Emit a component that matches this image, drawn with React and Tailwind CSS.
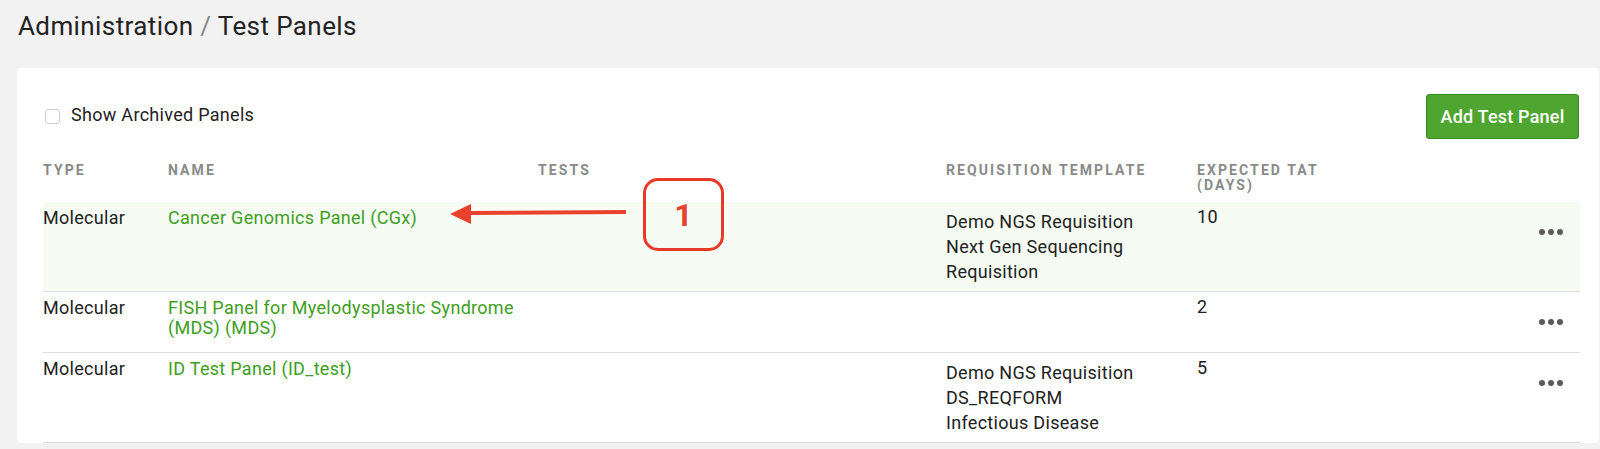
import React from "react";

const rows = [
  {
    type: "Molecular",
    name: ["Cancer Genomics Panel (CGx)"],
    reqs: ["Demo NGS Requisition", "Next Gen Sequencing", "Requisition"],
    tat: "10",
    highlight: true,
  },
  {
    type: "Molecular",
    name: ["FISH Panel for Myelodysplastic Syndrome", "(MDS) (MDS)"],
    reqs: [],
    tat: "2",
  },
  {
    type: "Molecular",
    name: ["ID Test Panel (ID_test)"],
    reqs: ["Demo NGS Requisition", "DS_REQFORM", "Infectious Disease"],
    tat: "5",
  },
];

function Dots() {
  return (
    <button className="w-[44px] h-[44px] flex items-center justify-center gap-[3px]">
      <span className="w-[6px] h-[6px] rounded-full bg-[#5a5a5a]" />
      <span className="w-[6px] h-[6px] rounded-full bg-[#5a5a5a]" />
      <span className="w-[6px] h-[6px] rounded-full bg-[#5a5a5a]" />
    </button>
  );
}

const cols = "grid grid-cols-[125px_370px_408px_251px_1fr_80px]";

export default function App() {
  return (
    <div
      className="min-h-[449px] bg-[#f2f2f2] text-[#212121]"
      style={{ fontFamily: "Roboto, 'Liberation Sans', sans-serif" }}
    >
      <div className="pl-[18px] pt-[11px] h-[68px]">
        <h1 className="text-[26px] leading-[30px] tracking-[0.4px] text-[#222]">
          Administration <span className="text-[#888]">/</span> Test Panels
        </h1>
      </div>
      <div className="ml-[17px] mr-[1px] bg-white rounded-[4px] relative">
        <div className="flex items-start justify-between pl-[28px] pr-[20px] pt-[26px]">
          <label className="flex items-center gap-[11px] mt-[11px]">
            <span className="w-[15px] h-[15px] rounded-[3px] border border-[#cfcfcf] bg-white mt-[3px]" />
            <span className="text-[18px] tracking-[0.3px] leading-[20px] text-[#222]">Show Archived Panels</span>
          </label>
          <button className="h-[45px] w-[153px] rounded-[3px] bg-[#4ea52f] border border-[#3a8a1f] text-white text-[18px] tracking-[0.2px] font-medium">
            Add Test Panel
          </button>
        </div>
        <div className="ml-[26px] mr-[19px] mt-[24px]">
          <div className={`${cols} text-[14px] font-bold tracking-[2.1px] text-[#8a8a8a] leading-[15px] pb-[9px]`}>
            <div>TYPE</div>
            <div>NAME</div>
            <div>TESTS</div>
            <div>REQUISITION TEMPLATE</div>
            <div>
              EXPECTED TAT
              <br />
              (DAYS)
            </div>
            <div />
          </div>
          {rows.map((r, i) => (
            <div
              key={i}
              className={`${cols} border-b border-[#dcdcdc] text-[18px] tracking-[0.3px] ${r.highlight ? "bg-[#f6fcf4]" : ""}`}
            >
              <div className="pt-[6px] leading-[20px]">{r.type}</div>
              <div className="pt-[6px] leading-[20px] text-[#3f9e22]">
                {r.name.map((n, j) => (
                  <div key={j}>{n}</div>
                ))}
              </div>
              <div />
              <div className="pt-[7px] pb-[7px]">
                {r.reqs.map((q, j) => (
                  <div key={j} className="leading-[25px]">
                    {q}
                  </div>
                ))}
              </div>
              <div className="pt-[5px] leading-[20px]">{r.tat}</div>
              <div className="flex justify-end pr-[7px] py-[8px]">
                <Dots />
              </div>
            </div>
          ))}
        </div>
        {/* annotations */}
        <svg
          className="absolute left-[414px] top-[134px]"
          width="200"
          height="30"
          viewBox="0 0 200 30"
        >
          <line x1="38" y1="11" x2="195" y2="10" stroke="#e8412c" strokeWidth="4" />
          <polygon points="19,12 40,2 40,22" fill="#e8412c" />
        </svg>
        <div className="absolute left-[626px] top-[110px] w-[81px] h-[73px] rounded-[15px] border-[3px] border-[#e63a26] flex items-center justify-center bg-transparent">
          <span className="text-[32px] font-bold text-[#e8412c] leading-none">1</span>
        </div>
      </div>
    </div>
  );
}
